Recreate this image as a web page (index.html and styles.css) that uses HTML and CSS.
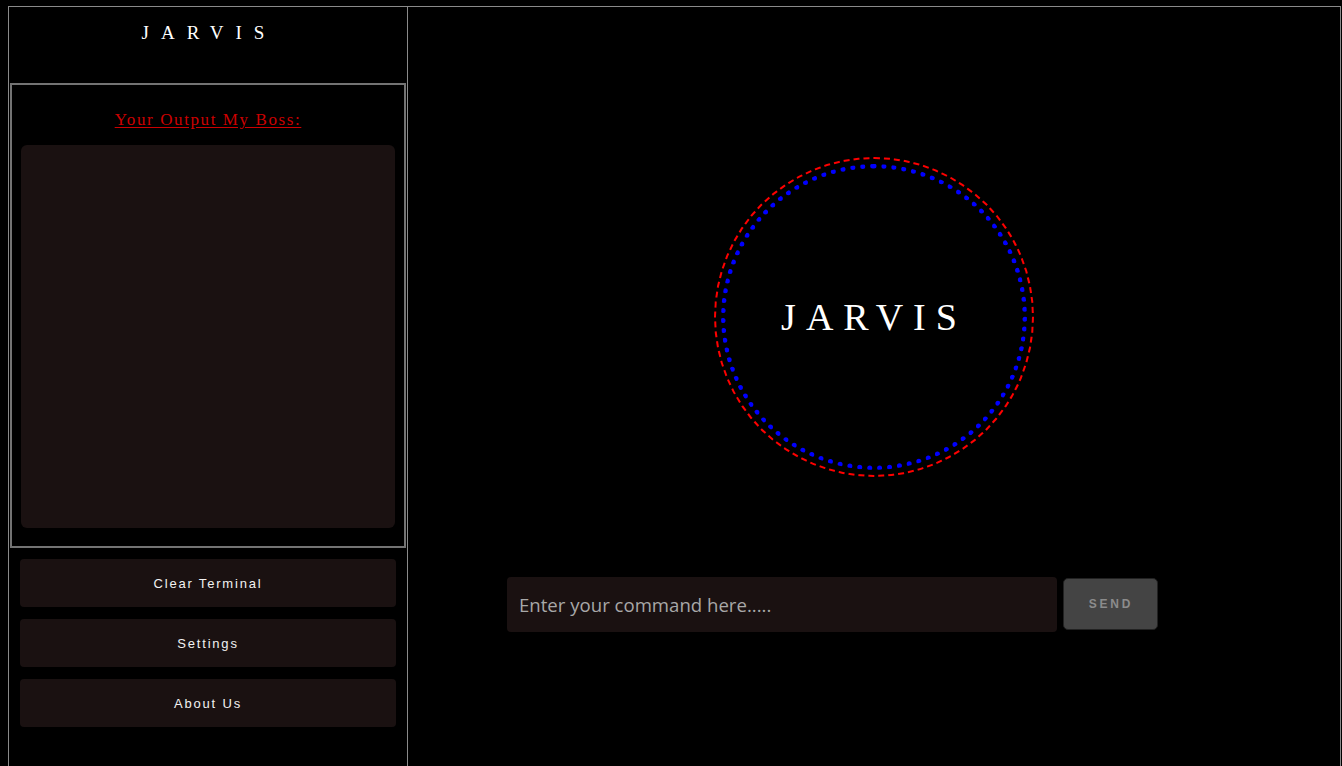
FILE: index.html
```html
<!DOCTYPE html>
<html>
<head>
<meta charset="utf-8">
<title>JARVIS</title>
<link rel="stylesheet" href="styles.css">
</head>
<body>
<div class="frame">
  <aside class="sidebar">
    <header class="brand">JARVIS</header>
    <section class="output-box">
      <h2 class="output-title">Your Output My Boss:</h2>
      <div class="output-area"></div>
    </section>
    <nav class="menu">
      <button class="menu-btn">Clear Terminal</button>
      <button class="menu-btn">Settings</button>
      <button class="menu-btn">About Us</button>
    </nav>
  </aside>
  <main class="main">
    <div class="ring-outer">
      <div class="ring-inner">
        <span class="ring-text">JARVIS</span>
      </div>
    </div>
    <div class="command-row">
      <input class="command-input" type="text" placeholder="Enter your command here.....">
      <button class="send-btn">SEND</button>
    </div>
  </main>
</div>
</body>
</html>
```
FILE: styles.css
```css
html, body {
  margin: 0;
  padding: 0;
  background: #000;
  overflow: hidden;
}
body {
  padding: 6px 1px 0 8px;
}
.frame {
  display: flex;
  height: 780px;
  border: 1px solid #8a8a8a;
  border-bottom: none;
  background: #000;
}
.sidebar {
  width: 398px;
  border-right: 1px solid #8a8a8a;
  display: flex;
  flex-direction: column;
}
.brand {
  height: 76px;
  box-sizing: border-box;
  padding-top: 16px;
  padding-left: 2px;
  text-align: center;
  color: #fff;
  font-family: "Liberation Serif", serif;
  font-size: 19px;
  line-height: 20px;
  letter-spacing: 12px;
}
.output-box {
  border: 2px solid #737373;
  margin: 0 1px 0 1px;
  padding: 0 9px 18px;
  height: 465px;
  box-sizing: border-box;
}
.output-title {
  margin: 25px 0 0;
  text-align: center;
  color: #cc0000;
  font-family: "Liberation Serif", serif;
  font-weight: normal;
  font-size: 17px;
  line-height: 20px;
  letter-spacing: 1.6px;
  text-decoration: underline;
  text-underline-offset: 2px;
}
.output-area {
  margin-top: 15px;
  height: 383px;
  background: #1a1111;
  border-radius: 6px;
}
.menu {
  display: flex;
  flex-direction: column;
  gap: 12px;
  padding: 11px 11px 0;
}
.menu-btn {
  height: 48px;
  border: none;
  border-radius: 4px;
  background: #1a1111;
  color: #f2f2f2;
  font-family: "Liberation Sans", Arial, sans-serif;
  font-size: 13px;
  letter-spacing: 1.8px;
  padding: 0;
}
.main {
  flex: 1;
  display: flex;
  flex-direction: column;
  align-items: center;
  padding-top: 150px;
}
.ring-outer {
  width: 320px;
  height: 320px;
  box-sizing: border-box;
  border: 2px dashed #ff0000;
  border-radius: 50%;
  display: flex;
  align-items: center;
  justify-content: center;
}
.ring-inner {
  width: 306px;
  height: 306px;
  box-sizing: border-box;
  border: 5px dotted #0000ff;
  border-radius: 50%;
  display: flex;
  align-items: center;
  justify-content: center;
}
.ring-text {
  color: #fff;
  font-family: "Liberation Serif", serif;
  font-size: 38px;
  letter-spacing: 10px;
}
.command-row {
  align-self: flex-start;
  margin-left: 99px;
  margin-top: 100px;
  display: flex;
  align-items: flex-start;
  gap: 6px;
}
.command-input {
  width: 550px;
  height: 55px;
  box-sizing: border-box;
  border: none;
  border-radius: 4px;
  background: #1a1111;
  padding: 0 12px;
  font-family: "Open Sans", sans-serif;
  font-size: 18.6px;
  color: #ddd;
  outline: none;
}
.command-input::placeholder {
  color: #a8a8a8;
}
.send-btn {
  margin-top: 1px;
  width: 95px;
  height: 52px;
  box-sizing: border-box;
  border: 1px solid #222;
  border-radius: 5px;
  background: #444;
  color: #8c8c8c;
  font-family: "Liberation Sans", Arial, sans-serif;
  font-weight: bold;
  font-size: 12px;
  letter-spacing: 2.8px;
  padding: 0 0 0 1px;
}
```
